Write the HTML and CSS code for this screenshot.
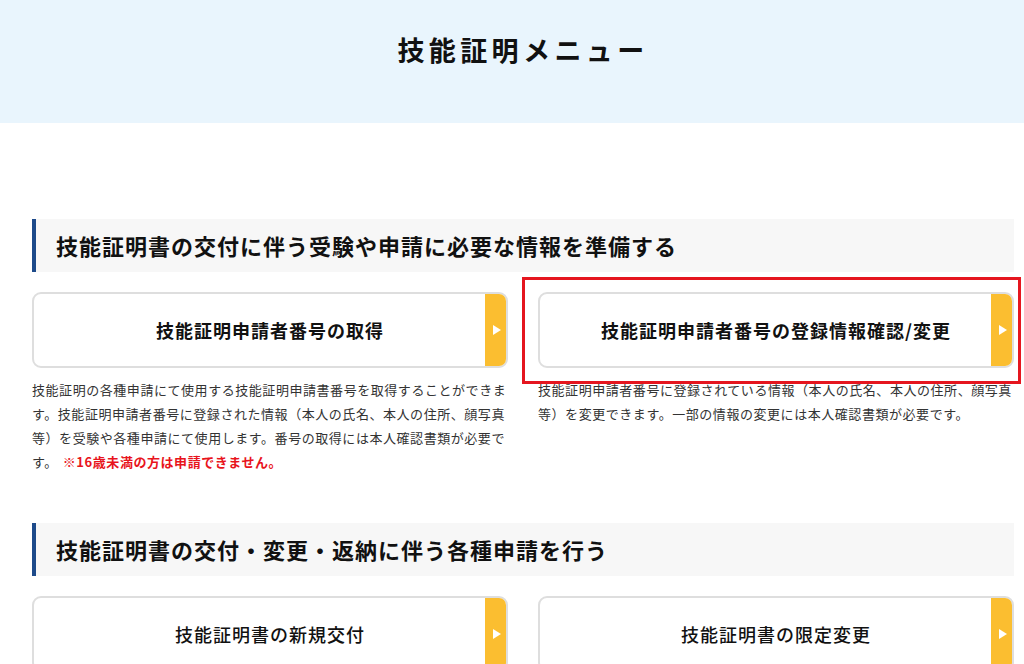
FILE: index.html
```html
<!DOCTYPE html>
<html lang="ja">
<head>
  <meta charset="UTF-8" />
  <meta name="viewport" content="width=device-width, initial-scale=1.0"/>
  <title>技能証明メニュー</title>
  <link rel="stylesheet" href="styles.css">
</head>
<body>
  <header class="page-header">
    <h1>技能証明メニュー</h1>
  </header>

  <main class="menu">
    <section class="menu-section">
      <h2 class="section-title">技能証明書の交付に伴う受験や申請に必要な情報を準備する</h2>
      <div class="card-grid">
        <div class="menu-item">
          <a class="menu-card" href="#">
            <span class="card-label bold">技能証明申請者番号の取得</span>
            <span class="card-arrow"></span>
          </a>
          <p class="card-desc">技能証明の各種申請にて使用する技能証明申請書番号を取得することができます。技能証明申請者番号に登録された情報（本人の氏名、本人の住所、顔写真等）を受験や各種申請にて使用します。番号の取得には本人確認書類が必要です。<strong class="warn">※16歳未満の方は申請できません。</strong></p>
        </div>
        <div class="menu-item">
          <div class="highlight"></div>
          <a class="menu-card" href="#">
            <span class="card-label bold">技能証明申請者番号の登録情報確認/変更</span>
            <span class="card-arrow"></span>
          </a>
          <p class="card-desc">技能証明申請者番号に登録されている情報（本人の氏名、本人の住所、顔写真等）を変更できます。一部の情報の変更には本人確認書類が必要です。</p>
        </div>
      </div>
    </section>

    <section class="menu-section">
      <h2 class="section-title">技能証明書の交付・変更・返納に伴う各種申請を行う</h2>
      <div class="card-grid">
        <div class="menu-item">
          <a class="menu-card" href="#">
            <span class="card-label">技能証明書の新規交付</span>
            <span class="card-arrow"></span>
          </a>
        </div>
        <div class="menu-item">
          <a class="menu-card" href="#">
            <span class="card-label">技能証明書の限定変更</span>
            <span class="card-arrow"></span>
          </a>
        </div>
      </div>
    </section>
  </main>
</body>
</html>
```

FILE: styles.css
```css
body {
  margin: 0;
  padding: 0;
  font-family: "Noto Sans CJK JP", "Noto Sans", sans-serif;
  color: #222;
  background: #fff;
}

.page-header {
  height: 123px;
  box-sizing: border-box;
  padding-top: 30px;
  background: #e9f5fd;
  text-align: center;
}

.page-header h1 {
  margin: 0;
  padding-left: 22px;
  font-size: 27px;
  line-height: 40px;
  font-weight: 700;
  letter-spacing: 4.4px;
  color: #111;
}

.menu {
  padding: 96px 10px 40px 32px;
}

.menu-section {
  margin-bottom: 49px;
}

.section-title {
  margin: 0 0 20px;
  height: 53px;
  box-sizing: border-box;
  padding-left: 20px;
  border-left: 4px solid #1d4a8a;
  background: #f7f7f7;
  font-size: 22px;
  line-height: 53px;
  font-weight: 700;
  letter-spacing: 1px;
  color: #111;
}

.card-grid {
  display: grid;
  grid-template-columns: 1fr 1fr;
  gap: 30px;
}

.menu-item {
  position: relative;
}

.menu-card {
  display: flex;
  align-items: stretch;
  height: 76px;
  box-sizing: border-box;
  border: 2px solid #dedede;
  border-radius: 9px;
  overflow: hidden;
  background: #fff;
  text-decoration: none;
  color: #111;
}

.card-label {
  flex: 1;
  display: flex;
  align-items: center;
  justify-content: center;
  padding-left: 21px;
  font-size: 18px;
  font-weight: 500;
  letter-spacing: 1px;
}

.card-label.bold {
  font-weight: 700;
}

.card-arrow {
  width: 21px;
  background: #fbbe30;
  display: flex;
  align-items: center;
  justify-content: center;
}

.card-arrow::before {
  content: "";
  width: 0;
  height: 0;
  border-top: 5px solid transparent;
  border-bottom: 5px solid transparent;
  border-left: 8px solid #fff;
  margin-left: 2px;
}

.card-desc {
  margin: 10px 0 0;
  font-size: 13px;
  line-height: 24px;
  letter-spacing: 0.55px;
  color: #333;
}

.warn {
  margin-left: 5px;
  color: #e8141c;
  font-weight: 700;
}

.highlight {
  position: absolute;
  left: -16px;
  right: -7px;
  top: -15px;
  height: 107px;
  border: 3px solid #e5161f;
  box-sizing: border-box;
  pointer-events: none;
}
```
